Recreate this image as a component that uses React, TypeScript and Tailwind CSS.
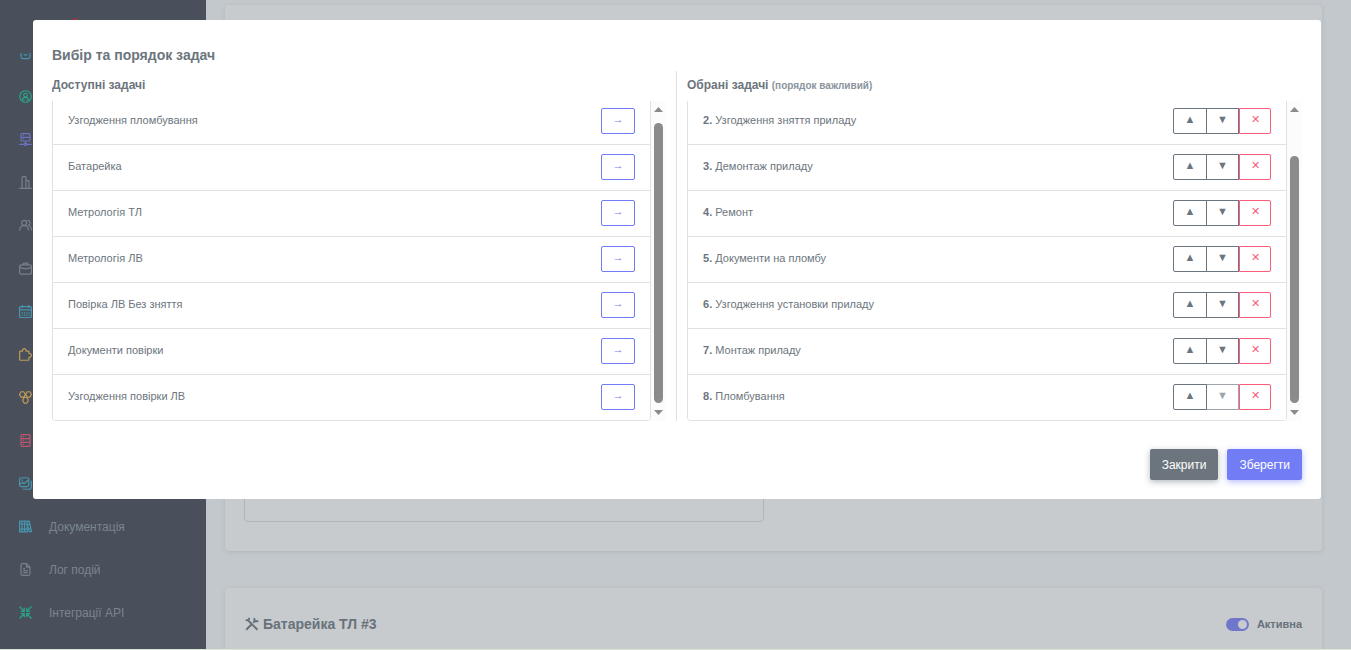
import React from 'react';

const available = [
  'Узгодження пломбування',
  'Батарейка',
  'Метрологія ТЛ',
  'Метрологія ЛВ',
  'Повірка ЛВ Без зняття',
  'Документи повірки',
  'Узгодження повірки ЛВ',
];

const selected = [
  { order: 2, name: 'Узгодження зняття приладу' },
  { order: 3, name: 'Демонтаж приладу' },
  { order: 4, name: 'Ремонт' },
  { order: 5, name: 'Документи на пломбу' },
  { order: 6, name: 'Узгодження установки приладу' },
  { order: 7, name: 'Монтаж приладу' },
  { order: 8, name: 'Пломбування' },
];

interface NavItem {
  id: string;
  color: string;
  label?: string;
  icon: React.ReactNode;
}

// Icons share a 14x14 grid
const navItems: NavItem[] = [
  {
    id: 'inbox',
    color: 'text-[#4596ae]',
    icon: <path d="M2.2 1.5v9q0 2 2 2h5.6q2 0 2-2v-9M5 8.5h4" />,
  },
  {
    id: 'account',
    color: 'text-[#2ba587]',
    icon: (
      <>
        <circle cx="7" cy="7" r="6.2" />
        <circle cx="7" cy="5.5" r="2" />
        <path d="M3.5 11.3c0-4.6 7-4.6 7 0M5.3 11.5v-1.3M8.7 11.5v-1.3" />
      </>
    ),
  },
  {
    id: 'network',
    color: 'text-[#6d72c4]',
    icon: (
      <>
        <rect x="2.2" y=".6" width="9.6" height="8" rx="1.2" />
        <path d="M2.5 4.6h9M4.3 2.6h1M4.3 6.6h1M7 8.6v2.2M.3 12.2h5.2M8.5 12.2h5.2" />
        <circle cx="7" cy="12.2" r="1.3" />
      </>
    ),
  },
  {
    id: 'reports',
    color: 'text-[#77818c]',
    icon: <path d="M.3 13.3h13.4M3.3 13V1.5q0-.8.8-.8h2.6q.8 0 .8.8V13M7.5 5h2.4q.8 0 .8.8V13" />,
  },
  {
    id: 'users',
    color: 'text-[#77818c]',
    icon: (
      <>
        <circle cx="5.5" cy="4.2" r="2.7" />
        <path d="M.7 12.5c0-7.3 9.6-7.3 9.6 0M9 1.7c3.6-.8 4 4.3 1.2 5 2 .7 3.2 2.6 3.3 5.3" />
      </>
    ),
  },
  {
    id: 'contracts',
    color: 'text-[#77818c]',
    icon: (
      <>
        <rect x=".6" y="3.2" width="12.8" height="9.8" rx="1.6" />
        <path d="M4.5 3V1.8q0-.7.7-.7h3.6q.7 0 .7.7V3M.8 5.7q6.2 3.2 12.4 0" />
      </>
    ),
  },
  {
    id: 'calendar',
    color: 'text-[#4596ae]',
    icon: (
      <>
        <rect x=".6" y="1.7" width="12.8" height="11.8" rx="1.5" />
        <path d="M.6 5.3h12.8M3.6 0v3.2M10.4 0v3.2" />
        <path d="M3 8.4h8.5M3 11h8.5" strokeDasharray="1.4 1" />
      </>
    ),
  },
  {
    id: 'modules',
    color: 'text-[#c09a56]',
    icon: (
      <path d="M.7 4.2q0-.8.8-.8h2.3C3.2-.2 8.2-.2 7.6 3.4h2.2q.9 0 .9.9v1.5c3.4-.4 3.4 4.6 0 4.2v2.3q0 .9-.9.9H1.6q-.9 0-.9-.9z" />
    ),
  },
  {
    id: 'clusters',
    color: 'text-[#c09a56]',
    icon: (
      <path d="M2.2 .8h3l1.6 2.9-1.6 2.9h-3L.6 3.7zM8.8 .8h3l1.6 2.9-1.6 2.9h-3L7.2 3.7zM5.5 7h3l1.6 3-1.6 3h-3l-1.6-3z" />
    ),
  },
  {
    id: 'storage',
    color: 'text-[#bf5670]',
    icon: (
      <>
        <rect x="2.2" y=".6" width="9.6" height="12.8" rx="1.4" />
        <path d="M2.5 4.9h9M2.5 9.1h9M4.3 2.8h1M4.3 7h1M4.3 11.2h1" />
      </>
    ),
  },
  {
    id: 'gallery',
    color: 'text-[#4596ae]',
    icon: (
      <>
        <rect x=".6" y=".8" width="10" height="9.6" rx="2" />
        <path d="M.8 8.2l3-2.7 1.6 1.8L10.5 3M2.8 3.3h1.4M13.3 4v6.5q0 2.7-2.7 2.7H4" />
      </>
    ),
  },
  {
    id: 'docs',
    color: 'text-[#4596ae]',
    label: 'Документація',
    icon: (
      <>
        <path d="M.6 1.2h8.2v11.6H.6zM3.3 1.2v11.6M6 1.2v11.6M.6 4.3h8.2M.6 9.8h8.2" />
        <path d="M9 1.8l2-.6 2.4 11-2.3.6L8.8 4M9.6 5l2-.6M10.6 9.8l2-.6" />
      </>
    ),
  },
  {
    id: 'log',
    color: 'text-[#77818c]',
    label: 'Лог подій',
    icon: (
      <path d="M8 .7H3.8q-1.6 0-1.6 1.6v9.4q0 1.6 1.6 1.6h6.4q1.6 0 1.6-1.6V4.5zM8 .7v3.8h3.8M4.5 6h2M4.5 8.2h5M4.5 10.4h5" />
    ),
  },
  {
    id: 'api',
    color: 'text-[#2ba587]',
    label: 'Інтеграції API',
    icon: <path d="M.5.5l5 5M5.7 2v3.7H2M13.5.5l-5 5M8.3 2v3.7H12M.5 13.5l5-5M5.7 12V8.3H2M13.5 13.5l-5-5M8.3 12V8.3H12" />,
  },
];

const Sidebar = () => (
  <aside className="w-[206px] shrink-0 bg-[#49505b] overflow-hidden">
    <div className="h-[53px] pl-[70px] pt-4">
      <svg width="24" height="24" viewBox="0 0 24 24" fill="#a8323e" aria-hidden="true">
        <path d="M0 6C2 3 4 2 7 2v6L3 22z" />
      </svg>
    </div>
    <nav className="h-[597px] overflow-hidden flex flex-col justify-end pb-4">
      {navItems.map((item) => (
        <a
          key={item.id}
          href={`#${item.id}`}
          aria-label={item.label ?? item.id}
          className="h-[43px] shrink-0 flex items-center gap-[17px] pl-[19px] text-[12px] text-[#7b858f]"
        >
          <svg
            width="13"
            height="13"
            viewBox="0 0 14 14"
            fill="none"
            stroke="currentColor"
            strokeWidth="1.3"
            strokeLinejoin="round"
            className={item.color}
            aria-hidden="true"
          >
            {item.icon}
          </svg>
          {item.label && <span>{item.label}</span>}
        </a>
      ))}
    </nav>
  </aside>
);

const Background = () => (
  <div className="h-screen overflow-hidden flex bg-[#c3c8cc] border-b border-[#dbe5d3]">
    <Sidebar />
    <main className="flex-1 flex flex-col gap-[37px] pl-[19px] pr-[29px] pt-[5px]">
      <section className="h-[546px] shrink-0 rounded bg-[#c7cbce] px-[19px] pb-[29px] flex items-end shadow-[0_1px_4px_rgba(90,100,125,0.18)]">
        <textarea
          aria-label="Коментар"
          className="w-[520px] h-20 resize-none rounded border border-[#afb5ba] bg-transparent"
        />
      </section>
      <section className="h-40 shrink-0 rounded bg-[#c7cbce] px-5 pt-[21px] shadow-[0_1px_4px_rgba(90,100,125,0.18)]">
        <div className="h-[30px] flex items-center justify-between">
          <h4 className="flex items-center gap-1 text-[14px] font-bold text-[#68727b]">
            <svg width="14" height="14" viewBox="0 0 14 14" fill="none" stroke="currentColor" aria-hidden="true">
              <path strokeWidth="2" d="M3.5 3.8l9 9M1.2 12.8l5-5M8.2 5.8l2.2-2.2" />
              <path strokeWidth="2" d="M.8 2.8q2.8 1.7 3.4-2M9.7 1.2q-1.5 4 3.6 2.8" />
            </svg>
            Батарейка ТЛ #3
          </h4>
          <label className="flex items-center gap-2 text-[11px] font-bold text-[#68727b]">
            <input type="checkbox" defaultChecked className="peer sr-only" />
            <span className="flex w-[23px] h-[13px] items-center justify-end rounded-full bg-[#7077cb] pr-[2px]">
              <span className="size-[9px] rounded-full bg-[#c7cbce]" />
            </span>
            Активна
          </label>
        </div>
      </section>
    </main>
  </div>
);

const Scrollbar = ({ thumb }: { thumb: string }) => (
  <div className="w-[15px] shrink-0 flex flex-col items-center bg-[#fcfcfc] py-[6px]" aria-hidden="true">
    <svg width="9" height="5" viewBox="0 0 9 5" fill="#8b8b8b">
      <path d="M4.5 0L9 5H0z" />
    </svg>
    <div className={`w-[9px] mt-auto mb-[7px] rounded-full bg-[#8b8b8b] ${thumb}`} />
    <svg width="9" height="5" viewBox="0 0 9 5" fill="#8b8b8b">
      <path d="M0 0h9L4.5 5z" />
    </svg>
  </div>
);

const listClass =
  'flex-1 min-w-0 flex flex-col justify-end overflow-hidden rounded-b border-x border-[#dee2e6] text-[11px] text-[#6c757d]';
const rowClass = 'h-[46px] shrink-0 flex items-center justify-between px-[15px] pb-[2px] border-b border-[#dee2e6]';

export default function App() {
  return (
    <div className="font-['Liberation_Sans',Arial,sans-serif]">
      <Background />
      <div className="fixed inset-0 pt-5 pl-[33px] pr-[30px]">
        <div role="dialog" aria-labelledby="tasks-title" className="rounded-[3px] bg-white p-[19px]">
          <h5 id="tasks-title" className="text-[14px] leading-8 font-bold text-[#6c757d]">
            Вибір та порядок задач
          </h5>

          <div className="grid grid-cols-2">
            <div className="border-r border-[#dee2e6] pr-[10px]">
              <h6 className="h-[30px] text-[12px] leading-7 font-bold text-[#6c757d]">Доступні задачі</h6>
              <div className="h-80 flex">
                <ul className={listClass}>
                  {available.map((name) => (
                    <li key={name} className={rowClass}>
                      <span>{name}</span>
                      <button
                        type="button"
                        aria-label={`Додати: ${name}`}
                        className="w-[34px] h-[26px] rounded-[2px] border border-[#727cf5] pb-[2px] text-[11px] leading-none text-[#727cf5]"
                      >
                        →
                      </button>
                    </li>
                  ))}
                </ul>
                <Scrollbar thumb="h-[280px]" />
              </div>
            </div>

            <div className="pl-[10px]">
              <h6 className="h-[30px] text-[12px] leading-7 font-bold text-[#6c757d]">
                Обрані задачі <small className="text-[10px] text-[#8a949d]">(порядок важливий)</small>
              </h6>
              <div className="h-80 flex">
                <ul className={listClass}>
                  {selected.map((task, i) => (
                    <li key={task.order} className={rowClass}>
                      <span>
                        <strong>{task.order}.</strong> {task.name}
                      </span>
                      <div className="flex h-[26px] text-[11px] leading-none">
                        <button
                          type="button"
                          aria-label="Вгору"
                          className="w-[34px] rounded-l-[2px] border border-[#6c757d] pb-[2px] text-[#6c757d]"
                        >
                          ▲
                        </button>
                        <button
                          type="button"
                          aria-label="Вниз"
                          disabled={i === selected.length - 1}
                          className="-ml-px w-[33px] border border-[#6c757d] pb-[2px] text-[#6c757d] disabled:opacity-65"
                        >
                          ▼
                        </button>
                        <button
                          type="button"
                          aria-label="Видалити"
                          className="w-8 rounded-r-[2px] border border-[#fa5c7c] pb-[2px] text-[#fa5c7c]"
                        >
                          ✕
                        </button>
                      </div>
                    </li>
                  ))}
                </ul>
                <Scrollbar thumb="h-[247px]" />
              </div>
            </div>
          </div>

          <div className="flex justify-end gap-[9px] pt-7 text-[12px] text-white">
            <button
              type="button"
              className="h-[31px] px-3 rounded-[2px] bg-[#6c757d] shadow-[0_2px_6px_rgba(108,117,125,0.5)]"
            >
              Закрити
            </button>
            <button
              type="button"
              className="h-[31px] px-3 rounded-[2px] bg-[#727cf5] shadow-[0_2px_6px_rgba(114,124,245,0.5)]"
            >
              Зберегти
            </button>
          </div>
        </div>
      </div>
    </div>
  );
}
